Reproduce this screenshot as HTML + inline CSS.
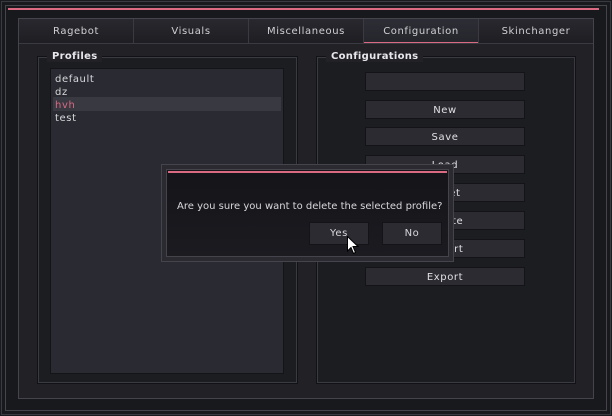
<!DOCTYPE html>
<html><head><style>
*{margin:0;padding:0;box-sizing:border-box}
body{width:612px;height:416px;background:#1a1b1f;position:relative;overflow:hidden;font-family:"DejaVu Sans","Liberation Sans",sans-serif;font-size:10px;color:#d8d8dc;letter-spacing:0.6px}
.a{position:absolute}
.btn{position:absolute;left:365px;width:160px;height:19px;background:#2b2b31;border:1px solid #141418;text-align:center;line-height:19px;color:#e0e0e4}
.tab{position:absolute;top:19px;height:24px;width:115px;text-align:center;line-height:25px;color:#d0d0d4;border-right:1px solid #3a3a42;background:linear-gradient(#28282e,#1e1e23)}
</style></head><body>
<div class="a" style="left:1px;top:1px;width:610px;height:414px;border:1px solid #3a3a42;background:#18191d"></div>
<div class="a" style="left:5px;top:5px;width:602px;height:406px;border:1px solid #45444c;background:#18191d"></div>
<div class="a" style="left:8px;top:8px;width:591px;height:2px;background:#d96a82"></div>
<div class="a" style="left:18px;top:18px;width:576px;height:381px;border:1px solid #45444c;background:#222126"></div>
<div class="tab" style="left:19px">Ragebot</div>
<div class="tab" style="left:134px">Visuals</div>
<div class="tab" style="left:249px">Miscellaneous</div>
<div class="tab" style="left:364px;background:linear-gradient(#2d2d35,#25252c)">Configuration</div>
<div class="tab" style="left:479px;width:114px;border-right:none">Skinchanger</div>
<div class="a" style="left:19px;top:43px;width:574px;height:1px;background:#3a3a42"></div>
<div class="a" style="left:364px;top:42px;width:114px;height:1px;background:#d96a82"></div>

<div class="a" style="left:37px;top:56px;width:261px;height:328px;border:1px solid #121216;background:#1c1d21;box-shadow:inset 0 0 0 1px #3a3a42"></div>
<div class="a" style="left:47px;top:51px;padding:0 5px;background:#222126;font-weight:bold;color:#e8e8ec;letter-spacing:0.3px">Profiles</div>
<div class="a" style="left:50px;top:68px;width:234px;height:306px;background:#2a2a33;border:1px solid #141418"></div>
<div class="a" style="left:53px;top:97px;width:228px;height:14px;background:#393942"></div>
<div class="a" style="left:55px;top:73px;line-height:13px">default<br>dz<br><span style="color:#d96a82">hvh</span><br>test</div>

<div class="a" style="left:316px;top:56px;width:260px;height:328px;border:1px solid #121216;background:#1c1d21;box-shadow:inset 0 0 0 1px #3a3a42"></div>
<div class="a" style="left:326px;top:51px;padding:0 5px;background:#222126;font-weight:bold;color:#e8e8ec;letter-spacing:0.3px">Configurations</div>
<div class="btn" style="top:72px"></div>
<div class="btn" style="top:100px">New</div>
<div class="btn" style="top:127px">Save</div>
<div class="btn" style="top:155px">Load</div>
<div class="btn" style="top:183px">Reset</div>
<div class="btn" style="top:211px">Delete</div>
<div class="btn" style="top:239px">Import</div>
<div class="btn" style="top:267px">Export</div>

<div class="a" style="left:161px;top:164px;width:293px;height:98px;background:#2a2a30;border:1px solid #45444c"></div>
<div class="a" style="left:166px;top:169px;width:283px;height:88px;background:linear-gradient(#141419,#1b1b20);border:1px solid #45444c"></div>
<div class="a" style="left:168px;top:171px;width:279px;height:2px;background:#d96a82"></div>
<div class="a" style="left:177px;top:201px;width:264px;text-align:center;font-size:10px;white-space:nowrap;letter-spacing:0">Are you sure you want to delete the selected profile?</div>
<div class="a" style="left:309px;top:222px;width:60px;height:23px;background:#2b2b31;border:1px solid #141418;text-align:center;line-height:22px">Yes</div>
<div class="a" style="left:382px;top:222px;width:60px;height:23px;background:#2b2b31;border:1px solid #141418;text-align:center;line-height:22px">No</div>
<svg class="a" style="left:347px;top:236px" width="12" height="19" viewBox="0 0 12 19"><path d="M0.5 0.5 L0.5 15 L4 11.5 L6.5 17.5 L8.5 16.5 L6 10.5 L11 10.5 Z" fill="#fff" stroke="#000" stroke-width="1"/></svg>
</body></html>
